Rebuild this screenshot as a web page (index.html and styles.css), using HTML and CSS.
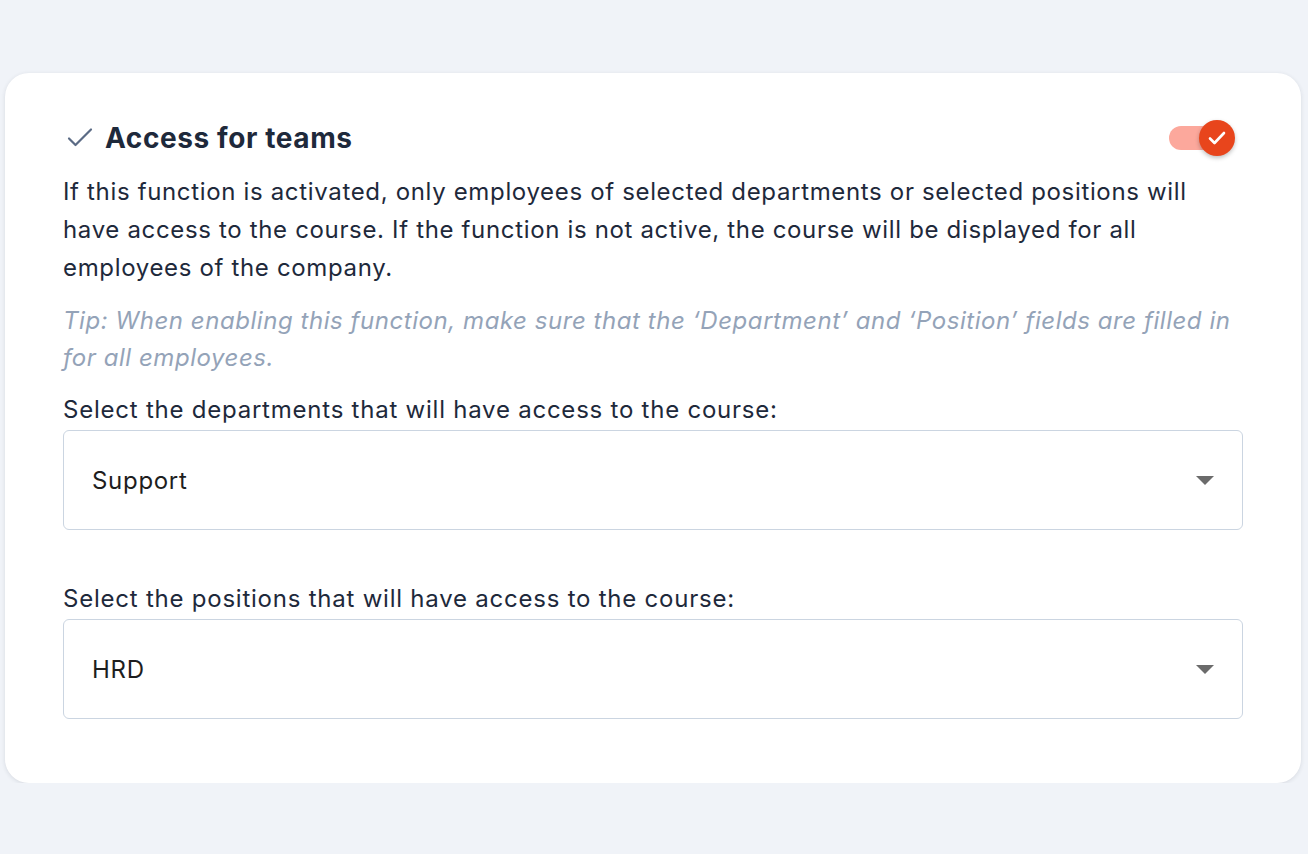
FILE: index.html
```html
<!DOCTYPE html>
<html lang="en">
<head>
<meta charset="utf-8">
<title>Access for teams</title>
<link rel="stylesheet" href="styles.css">
</head>
<body>
<main class="page">
  <section class="card">
    <header class="card-head">
      <h2 class="title">
        <svg class="title-icon" width="30" height="30" viewBox="0 0 30 30" aria-hidden="true"><path d="M4 15.5l6.5 6.5L26 6.5" fill="none" stroke="#5b6b85" stroke-width="2.2" stroke-linecap="round" stroke-linejoin="round"/></svg>
        Access for teams
      </h2>
      <div class="toggle" role="switch" aria-checked="true">
        <span class="toggle-track"></span>
        <span class="toggle-thumb">
          <svg width="22" height="22" viewBox="0 0 22 22" aria-hidden="true"><path d="M4 11.5l4.5 4.5L18 6" fill="none" stroke="#fff" stroke-width="2.6" stroke-linecap="round" stroke-linejoin="round"/></svg>
        </span>
      </div>
    </header>
    <p class="desc">If this function is activated, only employees of selected departments or selected positions will have access to the course. If the function is not active, the course will be displayed for all employees of the company.</p>
    <p class="tip">Tip: When enabling this function, make sure that the ‘Department’ and ‘Position’ fields are filled in for all employees.</p>
    <div class="field">
      <label class="label">Select the departments that will have access to the course:</label>
      <div class="select"><span class="value">Support</span><span class="caret"></span></div>
    </div>
    <div class="field field-2">
      <label class="label">Select the positions that will have access to the course:</label>
      <div class="select"><span class="value">HRD</span><span class="caret"></span></div>
    </div>
  </section>
</main>
</body>
</html>
```
FILE: styles.css
```css
* { box-sizing: border-box; }
html, body { margin: 0; padding: 0; }
body {
  background: #f0f3f8;
  font-family: Inter, "Noto Sans", sans-serif;
  color: #1e293b;
}
.page {
  padding: 73px 7px 0 5px;
}
.card {
  background: #fff;
  border-radius: 24px;
  box-shadow: 0 1px 4px rgba(30, 41, 59, 0.12);
  padding: 47px 58px 65px 58px;
  height: 710px;
}
.card-head {
  display: flex;
  align-items: center;
  justify-content: space-between;
  height: 36px;
}
.title {
  display: flex;
  align-items: center;
  gap: 10px;
  margin: 0;
  font-size: 28px;
  letter-spacing: 0.6px;
  font-weight: 700;
  color: #1e293b;
  line-height: 36px;
}
.title-icon { margin-left: 2px; }
.toggle {
  position: relative;
  width: 66px;
  height: 40px;
  margin-right: 8px;
}
.toggle-track {
  position: absolute;
  left: 0;
  top: 8px;
  width: 52px;
  height: 24px;
  border-radius: 12px;
  background: #fca89c;
}
.toggle-thumb {
  position: absolute;
  right: 0;
  top: 2px;
  width: 36px;
  height: 36px;
  border-radius: 50%;
  background: #e8451c;
  box-shadow: 0 2px 4px rgba(0, 0, 0, 0.25);
  display: flex;
  align-items: center;
  justify-content: center;
}
.desc {
  margin: 17px 0 0;
  font-size: 24px;
  letter-spacing: 0.66px;
  line-height: 38px;
  color: #1e293b;
}
.tip {
  margin: 15px 0 0;
  font-size: 24px;
  letter-spacing: 0.55px;
  line-height: 37px;
  font-style: italic;
  color: #94a3b8;
}
.field { margin-top: 19px; }
.field-2 { margin-top: 54px; }
.label {
  display: block;
  font-size: 24px;
  letter-spacing: 0.77px;
  line-height: 30px;
  color: #1e293b;
}
.select {
  margin-top: 5px;
  height: 100px;
  border: 1px solid #cbd5e1;
  border-radius: 6px;
  display: flex;
  align-items: center;
  justify-content: space-between;
  padding: 0 28px 0 28px;
}
.value {
  font-size: 24px;
  letter-spacing: 0.7px;
  color: #1e1e1e;
}
.caret {
  width: 0;
  height: 0;
  border-left: 9px solid transparent;
  border-right: 9px solid transparent;
  border-top: 9px solid #6b6b6b;
}
```
